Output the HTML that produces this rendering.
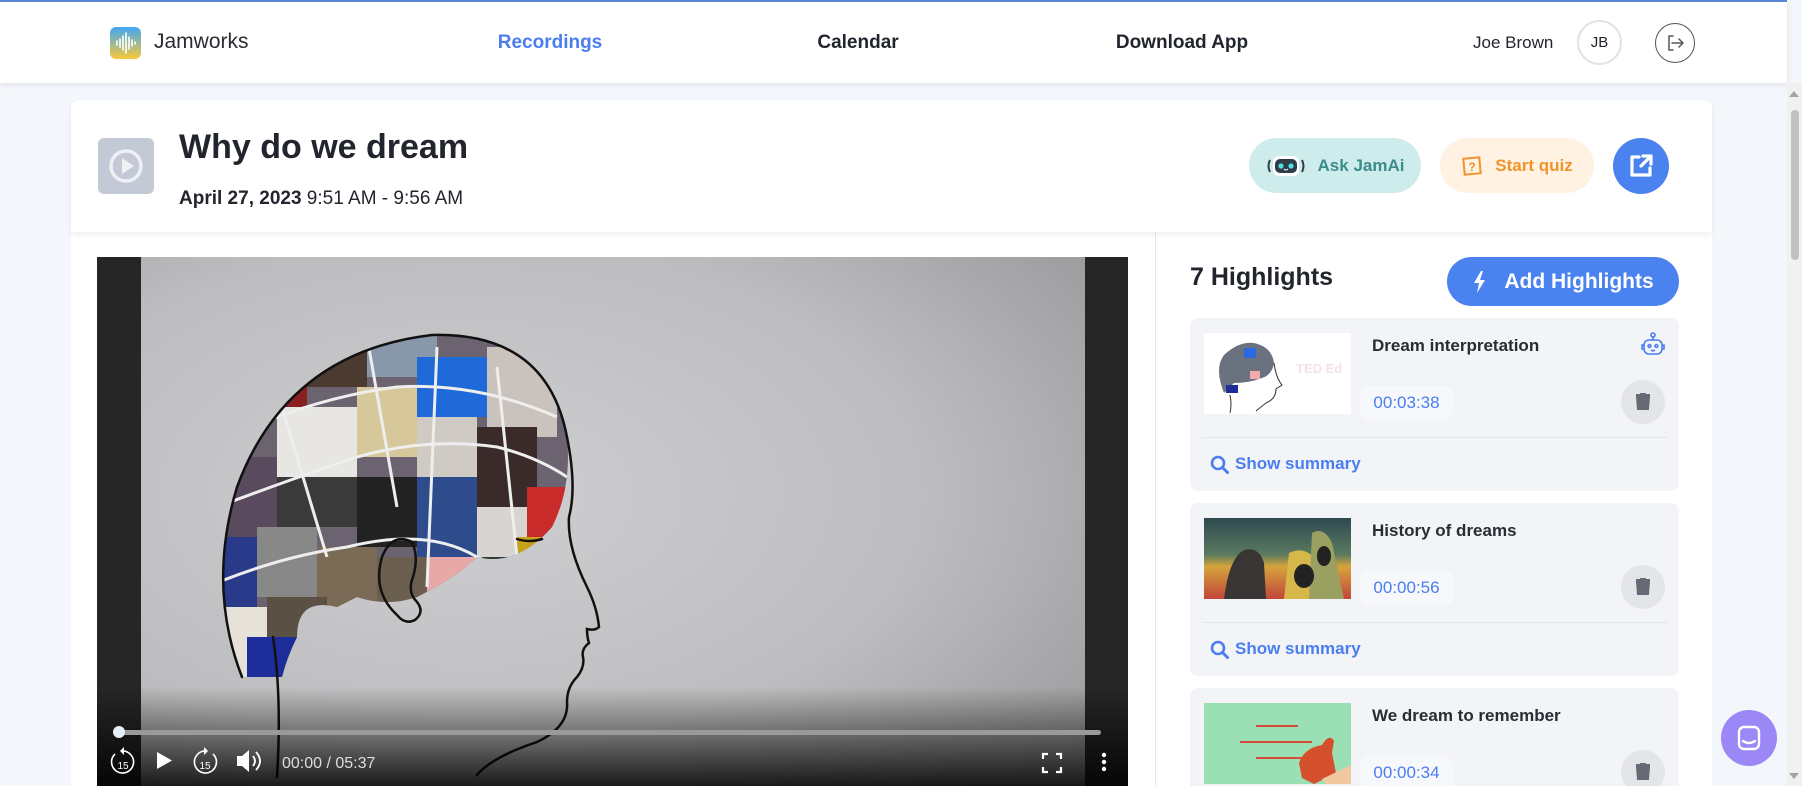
<!DOCTYPE html>
<html><head><meta charset="utf-8">
<style>
*{box-sizing:border-box;margin:0;padding:0}
html{width:1802px;height:786px;overflow:hidden}
body{width:1802px;height:786px;overflow:hidden;background:#f3f6fa;font-family:"Liberation Sans",sans-serif;color:#22252e;position:relative}
.nav{position:absolute;left:0;top:0;width:1787px;height:83px;background:#fff;border-top:2px solid #5b86d6;box-shadow:0 2px 6px rgba(0,0,0,.08)}
.abs{position:absolute}
.navlink{position:absolute;top:30px;font-size:19px;font-weight:bold;transform:translateX(-50%)}
.card{position:absolute;left:71px;top:100px;width:1641px;height:686px;background:#fff;border-radius:8px 8px 0 0}
.hdr{position:absolute;left:71px;top:100px;width:1641px;height:132px;background:#fff;border-radius:8px 8px 0 0;box-shadow:0 3px 6px rgba(0,0,0,.06)}
.pill{position:absolute;border-radius:28px;display:flex;align-items:center;justify-content:center;font-weight:bold;font-size:17px}
.hl{position:absolute;left:1190px;width:489px;background:#f3f4f7;border-radius:8px}
.hl .th{position:absolute;left:14px;top:15px;width:147px;height:81px;overflow:hidden}
.hl .t{position:absolute;left:182px;top:18px;font-size:17px;font-weight:bold;color:#2a2c33}
.hl .tm{position:absolute;left:170px;top:68px;width:93px;height:34px;background:#f7f8fb;border-radius:8px;color:#4a7ef0;font-size:17px;line-height:34px;text-align:center}
.hl .tr{position:absolute;left:431px;top:62px;width:44px;height:44px;border-radius:50%;background:#e4e5e9}
.hl .ln{position:absolute;left:12px;right:12px;top:119px;border-top:1px solid #e3e5ea}
.hl .ss{position:absolute;left:45px;top:136px;font-size:17px;font-weight:bold;color:#4a7ef0}
.hl .mg{position:absolute;left:20px;top:137px}
</style></head><body>
<div class="nav">
  <svg class="abs" style="left:110px;top:25px" width="31" height="32" viewBox="0 0 31 32"><defs><linearGradient id="lg" x1="0" y1="0" x2="0" y2="1"><stop offset="0" stop-color="#3fa7f5"/><stop offset="1" stop-color="#f8c93a"/></linearGradient></defs><rect width="31" height="32" rx="6" fill="url(#lg)"/><g stroke="#fff" stroke-width="1.6" stroke-linecap="round"><line x1="7" y1="14" x2="7" y2="18"/><line x1="10" y1="12" x2="10" y2="20"/><line x1="13" y1="9" x2="13" y2="23"/><line x1="16" y1="6" x2="16" y2="26"/><line x1="19" y1="10" x2="19" y2="22"/><line x1="22" y1="13" x2="22" y2="19"/><line x1="25" y1="15" x2="25" y2="17"/></g></svg>
  <div class="abs" style="left:154px;top:28px;font-size:21px;color:#2a2c33">Jamworks</div>
  <div class="navlink" style="left:550px;color:#4a7ef0">Recordings</div>
  <div class="navlink" style="left:858px">Calendar</div>
  <div class="navlink" style="left:1182px">Download App</div>
  <div class="abs" style="left:1473px;top:31px;font-size:17px">Joe Brown</div>
  <div class="abs" style="left:1577px;top:18px;width:45px;height:45px;border-radius:50%;border:2px solid #dfe2e8;font-size:15px;text-align:center;line-height:41px">JB</div>
  <div class="abs" style="left:1655px;top:21px;width:40px;height:40px;border-radius:50%;border:1.5px solid #555"><svg width="40" height="40" viewBox="0 0 40 40" style="position:absolute;left:-1.5px;top:-1.5px" fill="none" stroke="#555" stroke-width="1.5" stroke-linecap="round" stroke-linejoin="round"><path d="M18 13h-4v14h4"/><path d="M17 20h11M24 16l4 4-4 4"/></svg></div>
</div>
<div class="abs" style="left:1787px;top:83px;width:15px;height:703px;background:#f1f1f1"></div>
<div class="abs" style="left:1791px;top:110px;width:8px;height:150px;background:#c1c1c1;border-radius:4px"></div>
<div class="abs" style="left:1789px;top:91px;width:0;height:0;border-left:5px solid transparent;border-right:5px solid transparent;border-bottom:6px solid #a3a3a3"></div>
<div class="abs" style="left:1789px;top:773px;width:0;height:0;border-left:5px solid transparent;border-right:5px solid transparent;border-top:6px solid #a3a3a3"></div>

<div class="card"></div>
<div class="abs" style="left:1155px;top:232px;width:1px;height:554px;background:#e6e8ec"></div>
<div class="hdr">
  <div class="abs" style="left:27px;top:38px;width:56px;height:56px;border-radius:6px;background:#c4c9d6"><svg width="56" height="56" viewBox="0 0 56 56"><circle cx="28" cy="28" r="15" fill="none" stroke="#eef0f4" stroke-width="3.5"/><path d="M24 20v16l12-8z" fill="#eef0f4"/></svg></div>
  <div class="abs" style="left:108px;top:28px;font-size:34px;font-weight:bold;color:#22252e">Why do we dream</div>
  <div class="abs" style="left:108px;top:88px;font-size:19px;color:#22252e"><b>April 27, 2023</b> 9:51 AM - 9:56 AM</div>
</div>
<div class="pill" style="left:1249px;top:138px;width:172px;height:55px;background:#cdeceb;color:#3b8c8a">
  <svg width="40" height="22" viewBox="0 0 40 22" style="margin-right:12px"><path d="M4 5q-3 6 0 12M36 5q3 6 0 12" stroke="#2f3c4a" stroke-width="2" fill="none"/><rect x="7" y="1" width="26" height="20" rx="6" fill="#fff"/><rect x="9" y="4" width="22" height="14" rx="5" fill="#2f3c4a"/><circle cx="15" cy="11" r="2.6" fill="#4fe0e0"/><circle cx="25" cy="11" r="2.6" fill="#4fe0e0"/><path d="M18 14q2 2 4 0" stroke="#fff" stroke-width="1" fill="none"/></svg>Ask JamAi</div>
<div class="pill" style="left:1440px;top:138px;width:154px;height:55px;background:#fff2e3;color:#f0932b">
  <svg width="22" height="22" viewBox="0 0 22 22" style="margin-right:12px"><rect x="3" y="3" width="16" height="16" fill="none" stroke="#f0932b" stroke-width="2" transform="rotate(-5 11 11)"/><text x="11" y="16" font-size="12" text-anchor="middle" fill="#f0932b" font-family="Liberation Sans">?</text></svg>Start quiz</div>
<div class="abs" style="left:1613px;top:138px;width:56px;height:56px;border-radius:50%;background:#4a82ef"><svg width="56" height="56" viewBox="0 0 56 56" fill="none" stroke="#fff" stroke-width="3.2" stroke-linecap="round" stroke-linejoin="round"><path d="M26 19h-7v18h18v-7"/><path d="M28 28l9-9M30 18h8v8"/></svg></div>

<!-- video -->
<div class="abs" style="left:97px;top:257px;width:1031px;height:529px;background:#262626;overflow:hidden">
<svg width="1031" height="529" viewBox="0 0 1031 529">
<defs><radialGradient id="bg" cx="0.35" cy="0.45" r="0.8"><stop offset="0" stop-color="#cfcfd1"/><stop offset="0.6" stop-color="#bdbdbf"/><stop offset="1" stop-color="#9c9c9e"/></radialGradient>
<linearGradient id="sh" x1="0" y1="0" x2="0" y2="1"><stop offset="0" stop-color="#000" stop-opacity="0"/><stop offset="1" stop-color="#000" stop-opacity=".85"/></linearGradient>
<clipPath id="br"><path d="M145 420 Q110 330 140 230 Q190 95 335 78 Q450 75 470 180 Q475 230 455 270 Q420 310 380 300 Q360 320 320 340 Q290 350 260 340 L240 350 Q200 340 200 380 Q190 400 185 420 Z"/></clipPath></defs>
<rect x="44" y="0" width="944" height="529" fill="url(#bg)"/>
<g clip-path="url(#br)">
<rect x="100" y="60" width="400" height="380" fill="#6b6470"/>
<rect x="140" y="90" width="70" height="70" fill="#8a1f22"/><rect x="210" y="70" width="60" height="60" fill="#4a3a30"/><rect x="270" y="70" width="70" height="50" fill="#8898aa"/><rect x="320" y="100" width="70" height="60" fill="#1f6ad8"/><rect x="390" y="90" width="70" height="90" fill="#c9c2bd"/>
<rect x="180" y="150" width="80" height="70" fill="#e8e6e2"/><rect x="260" y="130" width="60" height="70" fill="#d6c89a"/><rect x="320" y="160" width="60" height="60" fill="#cfcac4"/><rect x="380" y="170" width="60" height="80" fill="#3a2a2a"/>
<rect x="110" y="200" width="70" height="80" fill="#5a4a5e"/><rect x="180" y="220" width="80" height="50" fill="#3a3a3a"/><rect x="260" y="220" width="60" height="70" fill="#222"/><rect x="320" y="220" width="60" height="80" fill="#2e4c8c"/><rect x="380" y="250" width="50" height="60" fill="#d8d4d2"/><rect x="430" y="230" width="50" height="50" fill="#c92a2a"/><rect x="420" y="280" width="50" height="40" fill="#c9a21c"/>
<rect x="100" y="280" width="60" height="80" fill="#2a3a8a"/><rect x="160" y="270" width="60" height="70" fill="#888"/><rect x="220" y="290" width="60" height="60" fill="#7b6a55"/><rect x="280" y="300" width="50" height="60" fill="#6b6050"/><rect x="330" y="300" width="50" height="60" fill="#e7a8a8"/><rect x="380" y="300" width="40" height="50" fill="#2f3a36"/>
<rect x="110" y="350" width="60" height="80" fill="#e7e2d8"/><rect x="170" y="340" width="60" height="60" fill="#5b5044"/><rect x="150" y="380" width="60" height="50" fill="#1d2e9a"/>
<g stroke="#eee" stroke-width="3" fill="none"><path d="M120 250 Q200 220 260 200 Q330 180 400 190 Q440 200 470 220"/><path d="M110 330 Q180 300 250 290 Q330 270 380 300 Q420 320 460 300"/><path d="M170 100 L230 300"/><path d="M270 80 L300 250"/><path d="M340 90 L330 330"/><path d="M400 110 L420 300"/><path d="M130 180 Q220 140 300 130 Q380 125 460 160"/></g>
</g>
<g fill="none" stroke="#111" stroke-width="2.5" stroke-linecap="round">
<path d="M145 420 Q110 330 140 230 Q190 95 335 78 Q450 75 470 180 Q480 230 472 260 Q470 290 490 330 Q500 350 502 370 Q498 374 490 372 Q490 380 492 386 Q484 392 486 400 Q488 410 480 420 Q470 430 470 445 Q472 470 440 485 Q395 500 380 518"/>
<path d="M176 380 Q185 440 180 520"/>
<path d="M300 358 Q275 335 285 300 Q295 275 315 285 Q322 300 316 320 Q310 335 320 345 Q328 355 318 363 Q308 368 300 358"/>
<path d="M420 282 Q432 286 445 282"/>
</g>
<rect x="0" y="430" width="1031" height="99" fill="url(#sh)"/>
<rect x="18" y="473" width="986" height="5" rx="2.5" fill="#9a9a9a"/>
<circle cx="22" cy="475" r="6" fill="#e6eef7"/>
<g fill="#fff" font-family="Liberation Sans">
<g fill="none" stroke="#fff" stroke-width="1.6"><path d="M18 497 A11 11 0 1 0 25 494"/><path d="M116 497 A11 11 0 1 1 109 494"/></g>
<path d="M27 490 l-4 4 4 4z"/><path d="M107 490 l4 4 -4 4z"/>
<text x="26" y="512" font-size="10" text-anchor="middle">15</text>
<text x="108" y="512" font-size="10" text-anchor="middle">15</text>
<path d="M60 495 v17 l15 -8.5z"/>
<path d="M140 499 h5 l7 -6 v22 l-7 -6 h-5z"/>
<path d="M156 499 q4 5 0 10 M159 495 q8 9 0 18" stroke="#fff" stroke-width="1.8" fill="none"/>
<text x="185" y="511" font-size="16" fill="#ddd">00:00 / 05:37</text>
<g stroke="#fff" stroke-width="2.2" fill="none"><path d="M946 502v-5h5M959 497h5v5M964 510v5h-5M951 515h-5v-5"/></g>
<circle cx="1007" cy="498" r="2.2"/><circle cx="1007" cy="505" r="2.2"/><circle cx="1007" cy="512" r="2.2"/>
</g>
</svg></div>

<!-- right -->
<div class="abs" style="left:1190px;top:263px;font-size:25px;font-weight:bold;color:#22252e">7 Highlights</div>
<div class="pill" style="left:1447px;top:257px;width:232px;height:49px;background:#4a82ef;color:#fff;font-size:21px;border-radius:25px">
<svg width="16" height="24" viewBox="0 0 16 24" style="margin-right:16px"><path d="M9 1L2 13h5l-2 10 8-13H8l3-9z" fill="#fff"/></svg>Add Highlights</div>

<div class="hl" style="top:318px;height:173px">
  <div class="th" style="background:#fff"><svg width="147" height="81" viewBox="0 0 147 81"><path d="M20 60 Q10 35 20 22 Q35 8 50 10 Q68 14 70 30 Q68 42 58 45 Q45 50 30 50Z" fill="#6a7280"/><rect x="40" y="15" width="12" height="10" fill="#2a6ae0"/><rect x="46" y="38" width="10" height="8" fill="#f3a8ac"/><rect x="22" y="52" width="12" height="8" fill="#1d2e9a"/><path d="M70 30 Q72 45 78 52 L72 56 Q72 66 62 70 L52 78 M26 62 Q28 72 26 80" stroke="#333" fill="none" stroke-width="1"/><text x="92" y="40" font-size="13" fill="#f3e3e3" font-weight="bold" font-family="Liberation Sans">TED Ed</text></svg></div>
  <div class="t">Dream interpretation</div>
  <svg class="abs" style="left:449px;top:13px" width="28" height="28" viewBox="0 0 28 28" fill="none" stroke="#4a7ef0" stroke-width="1.6"><circle cx="14" cy="4" r="2"/><path d="M14 6v3"/><rect x="5" y="9" width="18" height="14" rx="5"/><circle cx="10.5" cy="15" r="1.4"/><circle cx="17.5" cy="15" r="1.4"/><path d="M12 19q2 1.5 4 0M5 14h-2v4h2M23 14h2v4h-2"/></svg>
  <div class="tm">00:03:38</div>
  <div class="tr"><svg width="44" height="44" viewBox="0 0 44 44"><path d="M16 17h12l-1 12h-10z M15 15h14 M19 14h6" fill="#666a75" stroke="#666a75" stroke-width="2"/></svg></div>
  <div class="ln"></div>
  <svg class="mg" width="20" height="20" viewBox="0 0 20 20"><circle cx="8" cy="8" r="6" fill="none" stroke="#4a7ef0" stroke-width="2.6"/><path d="M12.5 12.5l5 5" stroke="#4a7ef0" stroke-width="3" stroke-linecap="round"/></svg>
  <div class="ss">Show summary</div>
</div>

<div class="hl" style="top:503px;height:173px">
  <div class="th"><svg width="147" height="81" viewBox="0 0 147 81"><defs><linearGradient id="sk" x1="0" y1="0" x2="0" y2="1"><stop offset="0" stop-color="#2e4a50"/><stop offset=".45" stop-color="#5a7a60"/><stop offset=".6" stop-color="#d6a43c"/><stop offset="1" stop-color="#c2443a"/></linearGradient></defs><rect width="147" height="81" fill="url(#sk)"/><path d="M20 81 Q25 40 40 32 Q55 28 60 45 L62 81z" fill="#3a3535"/><path d="M80 81 L85 35 Q100 28 110 40 L112 81z" fill="#d6b84a"/><path d="M105 81 L108 15 Q120 8 128 25 L140 81z" fill="#9aa060"/><ellipse cx="100" cy="58" rx="10" ry="12" fill="#222"/><ellipse cx="120" cy="38" rx="7" ry="10" fill="#222"/></svg></div>
  <div class="t">History of dreams</div>
  <div class="tm">00:00:56</div>
  <div class="tr"><svg width="44" height="44" viewBox="0 0 44 44"><path d="M16 17h12l-1 12h-10z M15 15h14 M19 14h6" fill="#666a75" stroke="#666a75" stroke-width="2"/></svg></div>
  <div class="ln"></div>
  <svg class="mg" width="20" height="20" viewBox="0 0 20 20"><circle cx="8" cy="8" r="6" fill="none" stroke="#4a7ef0" stroke-width="2.6"/><path d="M12.5 12.5l5 5" stroke="#4a7ef0" stroke-width="3" stroke-linecap="round"/></svg>
  <div class="ss">Show summary</div>
</div>

<div class="hl" style="top:688px;height:98px;border-radius:8px 8px 0 0">
  <div class="th"><svg width="147" height="81" viewBox="0 0 147 81"><rect width="147" height="81" fill="#9be0b4"/><g stroke="#d84a3a" stroke-width="2"><path d="M52 23h42M36 39h72M52 55h50"/></g><path d="M95 60 Q100 45 118 42 Q125 30 130 38 L128 50 L132 70 L110 81 L98 75z" fill="#d4502c"/><path d="M118 76 L147 62 L147 81 L122 81z" fill="#f0c8a0"/></svg></div>
  <div class="t">We dream to remember</div>
  <div class="tm">00:00:34</div>
  <div class="tr"><svg width="44" height="44" viewBox="0 0 44 44"><path d="M16 17h12l-1 12h-10z M15 15h14 M19 14h6" fill="#666a75" stroke="#666a75" stroke-width="2"/></svg></div>
</div>

<div class="abs" style="left:1721px;top:710px;width:56px;height:56px;border-radius:50%;background:#9b87f5"><svg width="56" height="56" viewBox="0 0 56 56" fill="none" stroke="#fff" stroke-width="2.4" stroke-linecap="round"><rect x="18" y="17" width="20" height="22" rx="5"/><path d="M22 31q6 4 12 0"/></svg></div>
</body></html>
